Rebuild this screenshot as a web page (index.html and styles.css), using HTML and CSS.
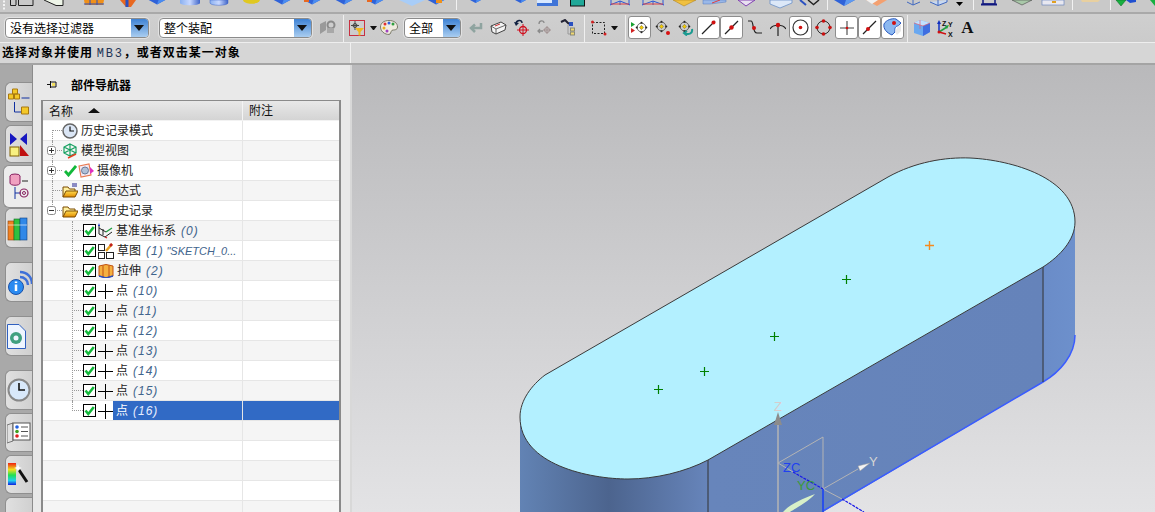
FILE: index.html
```html
<!DOCTYPE html>
<html lang="zh">
<head>
<meta charset="utf-8">
<title>部件导航器</title>
<link rel="stylesheet" href="styles.css">
</head>
<body>
<svg class="defs" aria-hidden="true">
  <defs>
    <linearGradient id="cyl" x1="0" y1="0" x2="1" y2="0"><stop offset="0" stop-color="#8ab0f0"/><stop offset=".5" stop-color="#c8d8ff"/><stop offset="1" stop-color="#3f64c8"/></linearGradient>
    <linearGradient id="side" gradientUnits="userSpaceOnUse" x1="520" y1="0" x2="1075" y2="0">
      <stop offset="0" stop-color="#6283b4"/><stop offset=".16" stop-color="#4c648e"/><stop offset=".34" stop-color="#6785bb"/><stop offset=".94" stop-color="#6583ba"/><stop offset=".945" stop-color="#6a8cc8"/><stop offset="1" stop-color="#6d90cc"/>
    </linearGradient>
    <linearGradient id="bg" x1="0" y1="0" x2="0" y2="1"><stop offset="0" stop-color="#b9b9bb"/><stop offset="1" stop-color="#e3e3e5"/></linearGradient>
    <linearGradient id="folder" x1="0" y1="0" x2="0" y2="1"><stop offset="0" stop-color="#ffdc50"/><stop offset="1" stop-color="#e08a00"/></linearGradient>
    <symbol id="chk" viewBox="0 0 13 13"><rect x=".5" y=".5" width="12" height="12" fill="#fff" stroke="#000"/><path d="M2.5 6.5 5.3 10 10.8 3" fill="none" stroke="#12b83a" stroke-width="2.6"/></symbol>
    <symbol id="pt" viewBox="0 0 15 16"><path d="M0 8.5H15M7.5 1V16" stroke="#000" fill="none"/></symbol>
    <symbol id="plus" viewBox="0 0 9 9"><rect x=".5" y=".5" width="8" height="8" rx="2" fill="#fff" stroke="#8c8c8c"/><path d="M2 4.5H7M4.5 2V7" stroke="#333"/></symbol>
    <symbol id="minus" viewBox="0 0 9 9"><rect x=".5" y=".5" width="8" height="8" rx="2" fill="#fff" stroke="#8c8c8c"/><path d="M2 4.5H7" stroke="#333"/></symbol>
    <symbol id="fold" viewBox="0 0 16 16"><path d="M1 14V4H6L7.5 6H13V9" fill="#fff0a0" stroke="#7a4a00"/><path d="M1 14 4 8H16L13 14Z" fill="url(#folder)" stroke="#7a4a00"/></symbol>
    <symbol id="cubeb" viewBox="0 0 22 8"><path d="M0 0 11 6 22 0Z" fill="#2f62d8"/><path d="M11 6 22 0H13Z" fill="#4a8cf0"/></symbol>
    <symbol id="nod" viewBox="0 0 15 15"><g fill="none" stroke="#444"><circle cx="7.5" cy="7.5" r="5"/></g><path d="M7.5 5 10 7.5 7.5 10 5 7.5Z" fill="#f0c800" stroke="#555" stroke-width=".5"/><circle cx="7.5" cy="2" r="1.2" fill="#222"/><circle cx="7.5" cy="13" r="1.2" fill="#222"/><circle cx="2" cy="7.5" r="1.2" fill="#222"/><circle cx="13" cy="7.5" r="1.2" fill="#222"/></symbol>
  </defs>
</svg>

<header class="strip">
  <svg class="strip-art" width="1155" height="12" viewBox="0 0 1155 12" aria-hidden="true">
    <path d="M3 1.5h2M3 5h2M3 8.5h2" stroke="#f4f4f4" stroke-width="2"/>
    <path d="M10.500 0V5.500H16M18.500 0V5.500H33V0M16 0V5" fill="none" stroke="#222"/>
    <path d="M44 0 56 5H63V0Z" fill="#eef5e8"/><path d="M44 0 56 5.500 63 5.500V0" fill="none" stroke="#222"/>
    <path d="M84 0H104L103 5H85Z" fill="#f09018"/><path d="M90 0V5M97 0V5M84 4H104" stroke="#2a50c0"/>
    <path d="M120 0H136L131 7H126Z" fill="#e86820"/><path d="M127 0V7" stroke="#2a50c0" stroke-width="3"/>
    <use href="#cubeb" x="147" y="0" width="20" height="6"/>
    <path d="M180 0H200V3C200 6 180 6 180 3Z" fill="url(#cyl)"/>
    <path d="M210 0H228V3C228 6 210 6 210 3Z" fill="url(#cyl)" stroke="#3f64c8" stroke-width=".5"/>
    <path d="M243 0H260C259 5 244 5 243 0Z" fill="#e0c820"/>
    <use href="#cubeb" x="272" y="0" width="20" height="6"/>
    <use href="#cubeb" x="302" y="0" width="20" height="6"/><rect x="304" y="0" width="5" height="2" fill="#e86820"/>
    <use href="#cubeb" x="334" y="0" width="20" height="6"/>
    <use href="#cubeb" x="365" y="0" width="20" height="6"/><rect x="367" y="0" width="5" height="2" fill="#e86820"/>
    <path d="M399 0H425L412 6Z" fill="#a8cdf8"/>
    <use href="#cubeb" x="426" y="0" width="20" height="6"/><rect x="436" y="0" width="6" height="3" fill="#f09018"/>
    <rect x="456" y="0" width="1" height="10" fill="#f2f2f2"/>
    <use href="#cubeb" x="466" y="0" width="19" height="4"/>
    <use href="#cubeb" x="510" y="0" width="21" height="4"/>
    <path d="M537 0H558V6H537Z" fill="#3f74d8"/><path d="M537 0H552V3H537Z" fill="#d8e8ff"/>
    <rect x="570.500" y="-2" width="14" height="8" fill="#20a898" stroke="#111"/>
    <path d="M610 5 620 1 630 5M620 1V5M611 0V5M629 0V5" fill="none" stroke="#2a58d8"/><path d="M611 4H629" stroke="#e04040"/>
    <path d="M642 5 653 1 664 5M653 1V5M643 0V5M663 0V5" fill="none" stroke="#2a58d8"/><path d="M643 4H663" stroke="#e04040"/>
    <path d="M673 0H696L684 6Z" fill="#f0c040" stroke="#a87810" stroke-width=".5"/>
    <path d="M703 0H726V2L710 4H703Z" fill="#9ab8e8" stroke="#5078c0" stroke-width=".5"/><path d="M712 3 720 0" stroke="#e04040"/>
    <path d="M738 0H755L746 6Z" fill="#e8e0f0" stroke="#8040b0"/>
    <path d="M770 0V4L780 8 792 3V0Z" fill="#dce8f8" stroke="#6a90c8" stroke-width=".8"/>
    <path d="M800 0 806 5" stroke="#2a50c0" stroke-width="2"/><path d="M808 0 814 5M819 0 813 5" stroke="#222" stroke-width="1.500"/>
    <rect x="827" y="0" width="1" height="10" fill="#f2f2f2"/>
    <path d="M834 0H855L844 6Z" fill="#2f62d8"/><path d="M844 6 855 0H846Z" fill="#5f9af0"/>
    <path d="M866 0H887L877 6Z" fill="#f4a070"/><path d="M866 0H878L872 4Z" fill="#f0f0f0"/>
    <path d="M907 2 913 5 920 2M913 0V5" fill="none" stroke="#4068c0"/>
    <path d="M930 2 938 5.500 947 2V0M938 0V5.500" fill="#c8d8f0" stroke="#4068c0"/>
    <path d="M956 2H963L959.500 6Z" fill="#000"/>
    <rect x="973" y="0" width="1" height="10" fill="#f2f2f2"/>
    <path d="M983 0V4H995V0" fill="none" stroke="#101880" stroke-width="1.500"/><path d="M981 4.500H997" stroke="#101880" stroke-width="2"/>
    <path d="M1012 0 1022 5 1032 0Z" fill="#a8c8a8" stroke="#444" stroke-width=".6"/>
    <rect x="1042" y="0" width="22" height="5" fill="#e8e8f0" stroke="#5a7ab8" stroke-width=".6"/><rect x="1052" y="1" width="4" height="2" fill="#e0a020"/>
    <rect x="1072" y="0" width="1" height="10" fill="#f2f2f2"/>
    <path d="M1081 0H1100L1098 2H1082Z" fill="#e8d0a0"/>
    <rect x="1110" y="0" width="1" height="10" fill="#f2f2f2"/>
    <path d="M1116 0H1126L1121 6Z" fill="#18b040" stroke="#0a6020" stroke-width=".5"/><path d="M1126 0H1136V2L1130 3Z" fill="#2050d0"/>
    <path d="M1150 0H1155V6Z" fill="#18b040"/>
  </svg>
</header>

<div class="toolbar">
  <div class="combo combo-filter"><span class="combo-text">没有选择过滤器</span><span class="combo-btn"></span></div>
  <div class="combo combo-asm"><span class="combo-text">整个装配</span><span class="combo-btn"></span></div>
  <span class="slot"><svg width="17" height="15" viewBox="0 0 17 15"><path d="M1 4 7 1 7 10 1 14Z" fill="#9a9a9a"/><circle cx="12" cy="5" r="3.500" fill="none" stroke="#8a8a8a" stroke-width="2"/><rect x="8" y="8" width="7" height="5" fill="#a8a8a8"/></svg></span>
  <i class="sep sep-a"></i>
  <span class="slot"><svg width="17" height="16" viewBox="0 0 17 16"><rect x=".5" y=".5" width="15" height="15" fill="none" stroke="#c83040"/><path d="M6 1V10M2 5.500H10" stroke="#444"/><circle cx="6" cy="5.500" r="2" fill="none" stroke="#444"/><path d="M6 8H15L11.500 12V15.500H9.500V12Z" fill="#f0b820"/></svg></span>
  <i class="caret"></i>
  <span class="slot"><svg width="18" height="15" viewBox="0 0 18 15"><path d="M9 .5C14 .5 17.500 3 17.500 7 17.500 10 14 10 13 10 11 10 11 13 10 14 8 15.500 .5 13 .5 7 .5 3 4 .5 9 .5Z" fill="#f0ece0" stroke="#7a7a68"/><circle cx="5" cy="4" r="1.500" fill="#e03030"/><circle cx="9" cy="3" r="1.500" fill="#3060e0"/><circle cx="13" cy="4" r="1.500" fill="#30a040"/><circle cx="4" cy="8" r="1.500" fill="#e8b020"/><circle cx="7" cy="11" r="1.500" fill="#a040c0"/></svg></span>
  <div class="combo combo-all"><span class="combo-text">全部</span><span class="combo-btn"></span></div>
  <span class="slot slot-first"><svg width="14" height="12" viewBox="0 0 14 12"><path d="M12 1V6H3M6 2.500 2 6 6 10" fill="none" stroke="#8fa4a0" stroke-width="2.500"/></svg></span>
  <span class="slot"><svg width="17" height="14" viewBox="0 0 17 14"><path d="M1 5 11 1 16 4 15 9 6 13 2 11Z" fill="#f4f4f4" stroke="#444"/><path d="M1 5 6 8 16 4M6 8V13" fill="none" stroke="#444" stroke-width=".8"/><path d="M5 5 10 3" stroke="#d03030"/></svg></span>
  <span class="slot"><svg width="15" height="17" viewBox="0 0 15 17"><path d="M2 5C2 1 8 0 8 4" fill="none" stroke="#102040" stroke-width="1.500"/><path d="M0 3 2 7 5 4Z" fill="#102040"/><circle cx="9" cy="11" r="3.500" fill="none" stroke="#d01020" stroke-width="1.300"/><path d="M9 5V17M3 11H15" stroke="#d01020"/></svg></span>
  <span class="slot"><svg width="15" height="17" viewBox="0 0 15 17"><path d="M2 5C2 1 7 1 7 4M6 12H1M3 10 1 12 3 14" fill="none" stroke="#8a8a8a" stroke-width="1.300"/><circle cx="10" cy="11" r="2.500" fill="none" stroke="#a09090"/><path d="M10 7V15M6 11H14" stroke="#a09090"/></svg></span>
  <span class="slot"><svg width="16" height="17" viewBox="0 0 16 17"><path d="M1 3 5 1 9 5" fill="none" stroke="#223" stroke-width="2"/><rect x="9" y="3" width="4" height="4" fill="#2a50c0"/><rect x="10.500" y="9" width="4" height="3" fill="#f0d870" stroke="#887"/><rect x="10.500" y="13" width="4" height="3" fill="#f0d870" stroke="#887"/><path d="M8 6V15H10" fill="none" stroke="#999"/></svg></span>
  <i class="sep sep-b"></i>
  <span class="slot"><svg width="16" height="16" viewBox="0 0 16 16"><rect x="1.500" y="2.500" width="12" height="11" fill="none" stroke="#222" stroke-dasharray="2 1.500"/><circle cx="1.500" cy="2" r="1.500" fill="#d02020"/><circle cx="14" cy="14" r="1.500" fill="#d02020"/></svg></span>
  <i class="caret caret-wide"></i>
  <i class="sep sep-c"></i>
  <span class="slot boxed"><svg width="17" height="15" viewBox="0 0 17 15"><path d="M0 2 4 4.500 0 7Z" fill="#18a030"/><path d="M0 8 4 10.500 0 13Z" fill="#d02020"/><use href="#nod" x="4" y="1" width="13" height="13"/></svg></span>
  <span class="slot"><svg width="15" height="15" viewBox="0 0 15 15"><use href="#nod" width="13" height="13"/><rect x="11" y="11" width="4" height="4" rx="2" fill="#d81010"/></svg></span>
  <span class="slot"><svg width="16" height="16" viewBox="0 0 16 16"><use href="#nod" width="13" height="13"/><path d="M14 9C15 14 10 15 7 13M9 11 6 13 9 15.500" fill="none" stroke="#1a9a90" stroke-width="2"/></svg></span>
  <span class="slot boxed"><svg width="15" height="15" viewBox="0 0 15 15"><path d="M1 14 14 1" stroke="#222" stroke-width="1.200"/><circle cx="12.500" cy="2.500" r="2" fill="#d01010"/></svg></span>
  <span class="slot boxed"><svg width="15" height="15" viewBox="0 0 15 15"><path d="M1 14 14 1" stroke="#222" stroke-width="1.200"/><circle cx="7.500" cy="7.500" r="2.200" fill="#d01010"/></svg></span>
  <span class="slot"><svg width="15" height="15" viewBox="0 0 15 15"><path d="M1 1H4C7 1 5 13 10 13H15" fill="none" stroke="#222" stroke-width="1.200"/><circle cx="7" cy="8" r="2" fill="#d01010"/></svg></span>
  <span class="slot"><svg width="16" height="16" viewBox="0 0 16 16"><path d="M0 9C3 4 13 4 16 9M8 5V16" fill="none" stroke="#222" stroke-width="1.200"/><circle cx="8" cy="5" r="2.200" fill="#d01010"/></svg></span>
  <span class="slot boxed"><svg width="17" height="17" viewBox="0 0 17 17"><circle cx="8.500" cy="8.500" r="7.500" fill="#fff" stroke="#333" stroke-width="1.200"/><circle cx="8.500" cy="8.500" r="1.800" fill="#d01010"/></svg></span>
  <span class="slot"><svg width="17" height="17" viewBox="0 0 17 17"><circle cx="8.500" cy="8.500" r="6.500" fill="none" stroke="#333"/><g fill="#c81010"><circle cx="8.500" cy="2" r="1.800"/><circle cx="8.500" cy="15" r="1.800"/><circle cx="2" cy="8.500" r="1.800"/><circle cx="15" cy="8.500" r="1.800"/></g></svg></span>
  <span class="slot boxed"><svg width="14" height="14" viewBox="0 0 14 14"><path d="M7 0V14M0 7H14" stroke="#444" stroke-width="1.100"/><circle cx="7" cy="7" r="1.300" fill="#d01010"/></svg></span>
  <span class="slot boxed"><svg width="15" height="15" viewBox="0 0 15 15"><path d="M1 14 14 1" stroke="#222" stroke-width="1.200"/><circle cx="6" cy="9" r="2" fill="#d01010"/></svg></span>
  <span class="slot boxed"><svg width="19" height="19" viewBox="0 0 19 19"><path d="M1 6C3 2 9 0 13 1L18 5 15 8C13 8 11 10 12 14L9 17C4 15 0 11 1 6Z" fill="#8cb8f0" stroke="#2a5ac0"/><path d="M12 14 15 8 18 6V13L14 17Z" fill="#e8e8e8"/><circle cx="11" cy="5" r="2" fill="#d01010"/></svg></span>
  <i class="sep sep-d"></i>
  <span class="slot"><svg width="18" height="18" viewBox="0 0 18 18"><path d="M1 4 7 1 17 4V13L10 17 1 14Z" fill="#6aa8f0"/><path d="M1 4 10 7 17 4 7 1Z" fill="#c0e0ff"/><path d="M10 7V17L17 13V4Z" fill="#3f6ee0"/><path d="M1 4 10 7 17 4M7 1V10" fill="none" stroke="#e06070" stroke-width=".7"/></svg></span>
  <span class="slot"><svg width="18" height="18" viewBox="0 0 18 18"><path d="M3 13V3" stroke="#1030c0" stroke-width="1.500"/><path d="M1 5 3 1 5 5Z" fill="#1030c0"/><path d="M3 13 11 8" stroke="#20a040" stroke-width="1.500"/><path d="M9 7 13 6 11 10Z" fill="#20a040"/><path d="M3 13 10 15" stroke="#d01010" stroke-width="1.500"/><circle cx="3" cy="13" r="1.500" fill="#d01010"/><text class="ax" x="6" y="7">Z</text><text class="ax" x="12" y="8">Y</text><text class="ax" x="12" y="17.500">X</text></svg></span>
  <span class="slot"><span class="big-a">A</span></span>
</div>

<div class="status">
  <p class="status-text">选择对象并使用 <span class="mb3">MB3</span>，或者双击某一对象</p>
  <i class="status-sep"></i>
</div>

<main class="main">
  <nav class="rail">
    <div class="tab t40"><svg width="23" height="28" viewBox="0 0 22 28"><path d="M5 1H10V6H5ZM1 6H6V11H1ZM7 6H12V11H7Z" fill="#f4c828" stroke="#a87810"/><path d="M7 14V24H14M14 10H22" fill="none" stroke="#1030a0" stroke-width="1"/><path d="M14 19H21V26H14Z" fill="#f4c828" stroke="#a87810"/></svg></div>
    <div class="tab t38 mt3"><svg width="22" height="28" viewBox="0 0 22 28"><path d="M3 3 10 9 3 15ZM20 3 13 9 20 15Z" fill="#1818c0"/><rect x="3" y="17" width="9" height="9" fill="#f8f080" stroke="#806000"/><path d="M13 26V15L22 26Z" fill="#c01010"/></svg></div>
    <div class="tab tab-active t43 mt2"><svg width="22" height="28" viewBox="0 0 22 28"><ellipse cx="8" cy="3" rx="5" ry="2" fill="#f0a0c0" stroke="#882060"/><path d="M3 3V10C3 13 13 13 13 10V3" fill="#f0a0c0" stroke="#882060"/><path d="M8 14V26M8 20H14" fill="none" stroke="#1030a0"/><path d="M15 8H21" stroke="#222"/><circle cx="17" cy="20" r="4" fill="none" stroke="#882060" stroke-width="1.200"/><circle cx="17" cy="20" r="1.500" fill="none" stroke="#882060"/></svg></div>
    <div class="tab t40"><svg width="24" height="26" viewBox="0 0 24 26"><rect x="1" y="6" width="6" height="19" fill="#f08020" stroke="#884010" stroke-width=".6"/><rect x="7" y="4" width="6" height="21" fill="#30c040" stroke="#107020" stroke-width=".6"/><rect x="13" y="3" width="7" height="22" fill="#3088e8" stroke="#104080" stroke-width=".6"/><path d="M1 10H20" stroke="#fff" stroke-width=".6"/></svg></div>
    <div class="tab t40 mt14"><svg width="26" height="27" viewBox="0 0 26 27"><path d="M13 3C20 3 25 8 25 15M13 8C17 8 21 11 21 16" fill="none" stroke="#3f70d8" stroke-width="2.500"/><circle cx="9" cy="18" r="7.500" fill="#2a8af0" stroke="#1a50a8"/><path d="M9 12.500V14M9 15.500V22" stroke="#fff" stroke-width="2.500"/></svg></div>
    <div class="tab t40 mt14"><svg width="19" height="25" viewBox="0 0 19 25"><path d="M.5 .5H12L18.500 7V24.500H.5Z" fill="#eef5ff" stroke="#3060c0"/><circle cx="9" cy="14" r="6" fill="#40a080"/><circle cx="9" cy="14" r="2.500" fill="#f0f4ff"/></svg></div>
    <div class="tab t40 mt14"><svg width="24" height="24" viewBox="0 0 24 24"><circle cx="12" cy="12" r="10.500" fill="#d8e8fa" stroke="#888" stroke-width="2"/><path d="M12 5V12H18" fill="none" stroke="#111" stroke-width="1.600"/></svg></div>
    <div class="tab t39 mt3"><svg width="24" height="24" viewBox="0 0 24 24"><path d="M0 4 6 2V20L0 22Z" fill="#e0e0e0" stroke="#777"/><rect x="6" y="2" width="17" height="17" fill="#fff" stroke="#555"/><circle cx="10" cy="6" r="1.800" fill="#2060e0"/><circle cx="10" cy="10.500" r="1.800" fill="#40a020"/><circle cx="10" cy="15" r="1.800" fill="#e02020"/><path d="M14 6H21M14 10.500H21M14 15H21" stroke="#555"/></svg></div>
    <div class="tab t39 mt3"><svg width="24" height="25" viewBox="0 0 24 25"><defs><linearGradient id="rb" x1="0" y1="0" x2="0" y2="1"><stop offset="0" stop-color="#f02010"/><stop offset=".3" stop-color="#f0e020"/><stop offset=".55" stop-color="#20e050"/><stop offset=".8" stop-color="#20d0f0"/><stop offset="1" stop-color="#1020e0"/></linearGradient></defs><rect x="1" y="1" width="8" height="22" fill="url(#rb)"/><path d="M12 8 20 20" stroke="#111" stroke-width="3"/><path d="M10 5 11 2 12 5 15 6 12 7 11 10 10 7 7 6Z" fill="#fff"/></svg></div>
    <div class="tab t39 mt3"><svg width="22" height="12" viewBox="0 0 22 12"><rect x="1" y="3" width="6" height="6" fill="#3a70d8"/><path d="M10 4H22" stroke="#3050c0"/><path d="M7 3 9 1 10 3Z" fill="#fff"/></svg></div>
  </nav>

  <aside class="panel">
    <div class="panel-title">
      <svg width="11" height="9" viewBox="0 0 11 9"><path d="M0 4.500H3M3.500 1V8M3.500 2H9V7H3.500" fill="none" stroke="#111"/><rect x="5" y="3" width="3" height="3" fill="#f4e060"/></svg>
      <span>部件导航器</span>
    </div>
    <div class="tree">
      <div class="tree-head"><div class="h-name">名称<i class="sort"></i></div><div class="h-note">附注</div></div>

      <div class="row l1 first">
        <div class="name"><span class="exp"></span><span class="ic ic-m6"><svg width="16" height="16" viewBox="0 0 16 16"><circle cx="8" cy="8" r="7" fill="#dbe6f5" stroke="#666" stroke-width="1.500"/><path d="M8 3.500V8H12" fill="none" stroke="#111" stroke-width="1.200"/></svg></span><span class="label">历史记录模式</span></div><div class="note"></div>
      </div>
      <div class="row l1">
        <div class="name"><svg class="exp" width="9" height="9"><use href="#plus"/></svg><span class="ic ic-m6"><svg width="16" height="16" viewBox="0 0 16 16"><path d="M8 1 14 4V10L8 13 2 10V4ZM2 4 8 7 14 4M8 7V13M2 10 8 7 14 10M8 1V7" fill="none" stroke="#16a060" stroke-width="1.200"/><path d="M6 15 14 11" stroke="#e84020" stroke-width="1.500"/></svg></span><span class="label">模型视图</span></div><div class="note"></div>
      </div>
      <div class="row l1">
        <div class="name"><svg class="exp" width="9" height="9"><use href="#plus"/></svg><span class="ic ic-m8"><svg width="13" height="13" viewBox="0 0 13 13"><path d="M1 7 4.500 11 12 2" fill="none" stroke="#12b83a" stroke-width="2.800"/></svg></span><span class="ic ic-m1"><svg width="16" height="16" viewBox="0 0 16 16"><path d="M1 3 11 1 13 12 3 14Z" fill="#f4e8f0" stroke="#e87850" stroke-width="1.100"/><circle cx="7" cy="7.500" r="3.500" fill="#b0c0d8" stroke="#6a7a98"/><path d="M12 4 16 8 12 11Z" fill="#e030c0"/></svg></span><span class="label">摄像机</span></div><div class="note"></div>
      </div>
      <div class="row l1">
        <div class="name"><span class="exp"></span><span class="ic ic-m6"><svg width="16" height="16" viewBox="0 0 16 16"><use href="#fold"/><path d="M10 1H15M10 3H15" stroke="#202090"/></svg></span><span class="label">用户表达式</span></div><div class="note"></div>
      </div>
      <div class="row l1 end">
        <div class="name"><svg class="exp" width="9" height="9"><use href="#minus"/></svg><span class="ic ic-m6"><svg width="16" height="16"><use href="#fold"/></svg></span><span class="label">模型历史记录</span></div><div class="note"></div>
      </div>

      <div class="row l2">
        <div class="name"><svg class="cb" width="13" height="13"><use href="#chk"/></svg><span class="ic ic-m2"><svg width="15" height="16" viewBox="0 0 15 16"><path d="M1 2V11L7 14 14 9M1 5 8 9M5 6V12" fill="none" stroke="#222"/><path d="M8 9 14 5" stroke="#20a040" stroke-width="1.300"/><path d="M7 14 9 15" stroke="#d02020" stroke-width="1.300"/><path d="M1 0 2 3 0 3Z" fill="#1030c0"/></svg></span><span class="label">基准坐标系<em>(0)</em></span></div><div class="note"></div>
      </div>
      <div class="row l2">
        <div class="name"><svg class="cb" width="13" height="13"><use href="#chk"/></svg><span class="ic ic-m2"><svg width="16" height="16" viewBox="0 0 16 16"><g fill="#fff" stroke="#222"><rect x=".5" y="1.500" width="6" height="6"/><rect x=".5" y="9.500" width="6" height="6"/><rect x="8.500" y="9.500" width="7" height="6"/></g><path d="M8 8 14 1" stroke="#e8a020" stroke-width="2.500"/><path d="M12 3 14 1" stroke="#c02020" stroke-width="2.500"/></svg></span><span class="label">草图<em>(1)</em> <em class="tight">"SKETCH_0...</em></span></div><div class="note"></div>
      </div>
      <div class="row l2">
        <div class="name"><svg class="cb" width="13" height="13"><use href="#chk"/></svg><span class="ic ic-m2"><svg width="16" height="14" viewBox="0 0 16 14"><path d="M1 2 8 .5 15 2V12L8 14 1 12Z" fill="#f4b040" stroke="#c05010"/><path d="M5 1.500V13M11 1.500V13" stroke="#c05010"/><path d="M1 12 8 14 15 12" fill="none" stroke="#2a50c0" stroke-width="1.400"/></svg></span><span class="label">拉伸<em>(2)</em></span></div><div class="note"></div>
      </div>
      <div class="row l2"><div class="name"><svg class="cb" width="13" height="13"><use href="#chk"/></svg><svg class="pt" width="15" height="16"><use href="#pt"/></svg><span class="label">点<em>(10)</em></span></div><div class="note"></div></div>
      <div class="row l2"><div class="name"><svg class="cb" width="13" height="13"><use href="#chk"/></svg><svg class="pt" width="15" height="16"><use href="#pt"/></svg><span class="label">点<em>(11)</em></span></div><div class="note"></div></div>
      <div class="row l2"><div class="name"><svg class="cb" width="13" height="13"><use href="#chk"/></svg><svg class="pt" width="15" height="16"><use href="#pt"/></svg><span class="label">点<em>(12)</em></span></div><div class="note"></div></div>
      <div class="row l2"><div class="name"><svg class="cb" width="13" height="13"><use href="#chk"/></svg><svg class="pt" width="15" height="16"><use href="#pt"/></svg><span class="label">点<em>(13)</em></span></div><div class="note"></div></div>
      <div class="row l2"><div class="name"><svg class="cb" width="13" height="13"><use href="#chk"/></svg><svg class="pt" width="15" height="16"><use href="#pt"/></svg><span class="label">点<em>(14)</em></span></div><div class="note"></div></div>
      <div class="row l2"><div class="name"><svg class="cb" width="13" height="13"><use href="#chk"/></svg><svg class="pt" width="15" height="16"><use href="#pt"/></svg><span class="label">点<em>(15)</em></span></div><div class="note"></div></div>
      <div class="row l2 end selected"><div class="name"><svg class="cb" width="13" height="13"><use href="#chk"/></svg><svg class="pt" width="15" height="16"><use href="#pt"/></svg><span class="label">点<em>(16)</em></span></div><div class="note"></div></div>

      <div class="row"><div class="name"></div><div class="note"></div></div>
      <div class="row"><div class="name"></div><div class="note"></div></div>
      <div class="row"><div class="name"></div><div class="note"></div></div>
      <div class="row"><div class="name"></div><div class="note"></div></div>
      <div class="row"><div class="name"></div><div class="note"></div></div>
    </div>
  </aside>

  <section class="viewport">
    <svg class="scene" width="803" height="447" viewBox="352 65 803 447" aria-label="模型视图">
      <rect x="352" y="65" width="803" height="447" fill="url(#bg)"/>
      <path d="M520 417V512H823L1043 382C1060 372 1075 355 1075 335V222Z" fill="url(#side)"/>
      <path d="M823 511 1043 382C1060 372 1075 355 1075 335" fill="none" stroke="#3a5cff" stroke-width="1.500"/>
      <path d="M1043 267V382M708 460V512" stroke="#333" stroke-width="1"/>
      <path d="M545 375 888 177C915 162 945 157 970 158 1012 160 1075 178 1075 222 1075 240 1060 256 1043 267L708 460C685 472 655 479 628 479 590 479 520 465 520 417 520 400 532 385 545 375Z" fill="#b3f0ff" stroke="#3a3a3a" stroke-width="1"/>
      <g stroke="#008000" fill="none" stroke-width="1.200">
        <path d="M654 389.500H663M658.500 385V394"/>
        <path d="M700 371.500H709M704.500 367V376"/>
        <path d="M770 336.500H779M774.500 332V341"/>
        <path d="M842 279.500H851M846.500 275V284"/>
      </g>
      <path d="M925 245.500H934M929.500 241V250" stroke="#f58a1e" fill="none" stroke-width="1.400"/>
      <g fill="none" stroke="#b4b4b4" stroke-width="1">
        <path d="M778 425V512" stroke-width="1.500"/>
        <path d="M778 463 823 437V489L858 469"/>
        <path d="M778 463 793 472M823 489 842 499"/>
      </g>
      <path d="M778 412 774 425H782Z" fill="#8c8c8c"/>
      <path d="M858 466 870 463 860 471Z" fill="#f4f4f4" stroke="#999" stroke-width=".5"/>
      <path d="M793 472 823 489M842 499 864 512" stroke="#1818e8" stroke-width="1.200" stroke-dasharray="3 1"/>
      <path d="M823 489V512" stroke="#2a50e8" stroke-width="2"/>
      <path d="M783 512C790 504 802 499 815 494 808 502 796 508 790 512Z" fill="#d8f0c8"/>
      <text class="lbl lz" x="778" y="411">Z</text>
      <text class="lbl lzc" x="783" y="472">ZC</text>
      <text class="lbl lyc" x="797" y="490">YC</text>
      <text class="lbl ly" x="869" y="466">Y</text>
    </svg>
  </section>
</main>
</body>
</html>
```

FILE: styles.css
```css
* { box-sizing: border-box; }
html, body { margin: 0; padding: 0; height: 512px; overflow: hidden; }
body {
  width: 1155px;
  background: #c8c8c8;
  font: 12px/16px "Noto Sans CJK SC", "Liberation Sans", sans-serif;
  color: #111;
}
svg { display: block; flex: none; }
.defs { width: 0; height: 0; position: absolute; }

/* cropped top toolbar */
.strip {
  height: 14px;
  background: #c9c9c9;
  border-bottom: 2px solid #a9a9a9;
  overflow: hidden;
}

/* second toolbar */
.toolbar {
  height: 29px;
  padding: 0 0 0 5px;
  display: flex;
  align-items: center;
  background: linear-gradient(#cfcfcf, #cbcbcb);
  border-bottom: 1px solid #eeeeee;
}
.combo {
  height: 20px;
  display: flex;
  background: #fff;
  border: 1px solid #8b8b8b;
  border-radius: 4px;
  box-shadow: 0 0 0 1px #e2e2e2;
  overflow: hidden;
  flex: none;
  margin-top: -1px;
}
.combo-filter { width: 144px; margin-right: 10px; }
.combo-asm { width: 153px; margin-right: 4px; }
.combo-all { width: 57px; margin-left: 4px; }
.combo-text { flex: 1; padding-left: 4px; line-height: 17px; white-space: nowrap; color: #000; }
.combo-btn {
  width: 17px;
  position: relative;
  background: linear-gradient(#3e82d4, #a9cdf0);
}
.combo-btn::after {
  content: "";
  position: absolute;
  left: 3px;
  top: 6px;
  border: 5px solid transparent;
  border-top: 6px solid #111;
  border-bottom: 0;
}
.slot {
  width: 23px;
  height: 23px;
  flex: none;
  display: flex;
  align-items: center;
  justify-content: center;
  margin-top: -1px;
}
.slot-first { margin-left: 3px; }
.boxed {
  background: #fff;
  border: 1px solid #8d8d8d;
  border-radius: 3px;
}
.caret {
  width: 7px;
  margin-left: 1px;
  flex: none;
  border: 3px solid transparent;
  border-top: 4px solid #111;
  border-bottom: 0;
}
.caret-wide { margin: 0 3px 0 1px; }
.sep {
  width: 1px;
  height: 27px;
  background: #efefef;
  flex: none;
}
.sep-a { margin: 0 2px 0 4px; }
.sep-b { margin: 0 2px 0 5px; }
.sep-c { margin: 0 2px 0 4px; }
.sep-d { margin: 0 2px 0 3px; }
.ax { font: 700 7px "Liberation Sans", sans-serif; fill: #111; }
.big-a { font: 700 17px/23px "Liberation Serif", serif; color: #111; }

/* status line */
.status {
  height: 22px;
  display: flex;
  justify-content: space-between;
  background: #d6d6d6;
  border-bottom: 2px solid #a4a4a4;
}
.status-text {
  margin: 0;
  padding-left: 2px;
  font-weight: 700;
  line-height: 18px;
  letter-spacing: 1px;
  white-space: nowrap;
  color: #000;
}
.mb3 {
  font: 400 12px "Liberation Mono", monospace;
  color: #223355;
  letter-spacing: 1.800px;
}
.status-sep { width: 1px; margin-right: 804px; background: #f0f0f0; }

/* main */
.main { height: 447px; display: flex; }
.rail {
  width: 33px;
  flex: none;
  padding: 17px 0 0 5px;
  background: #a9a9a9;
  border-right: 1px solid #8b8b8b;
  display: flex;
  flex-direction: column;
  overflow: hidden;
}
.tab {
  flex: none;
  width: 27px;
  display: flex;
  align-items: center;
  justify-content: flex-start;
  padding-left: 1px;
  background: linear-gradient(90deg, #e0e0e0, #d0d0d0);
  border: 1px solid #8f8f8f;
  border-right: 0;
  border-radius: 6px 0 0 6px;
  overflow: hidden;
}
.t38 { height: 38px; }
.t39 { height: 39px; }
.t40 { height: 40px; }
.t43 { height: 43px; }
.mt2 { margin-top: 2px; }
.mt3 { margin-top: 3px; }
.mt14 { margin-top: 14px; }
.tab-active {
  width: 30px;
  margin-left: -2px;
  background: #ececec;
  padding-left: 3px;
  position: relative;
  z-index: 1;
}
.panel {
  width: 319px;
  flex: none;
  padding-left: 8px;
  background: #e9e9e9;
  border-right: 2px solid #d8d8d8;
  display: flex;
  flex-direction: column;
}
.panel-title {
  height: 35px;
  padding: 4px 0 0 6px;
  display: flex;
  align-items: center;
  gap: 13px;
  font-weight: 700;
  color: #000;
}
.tree {
  width: 300px;
  flex: 1;
  background: #fff;
  border: 2px solid #8a8a8a;
  border-top-width: 1px;
  border-bottom: 0;
  overflow: hidden;
}
.tree-head {
  height: 20px;
  display: flex;
  background: linear-gradient(#e8e8e8, #d4d4d4);
  border-bottom: 1px solid #f2f2f2;
  line-height: 18px;
  color: #111;
}
.h-name { width: 199px; padding-left: 6px; display: flex; align-items: center; }
.h-note { flex: 1; padding-left: 6px; border-left: 1px solid #f4f4f4; }
.sort {
  margin-left: 15px;
  border: 6px solid transparent;
  border-bottom: 5px solid #111;
  border-top: 0;
}
.row {
  height: 20px;
  display: flex;
  position: relative;
  border-bottom: 1px solid #e6e6e6;
}
.row:nth-child(odd) { background: #f5f5f5; }
.name {
  width: 199px;
  flex: none;
  display: flex;
  align-items: center;
  white-space: nowrap;
  color: #222;
}
.note { flex: 1; border-left: 1px solid #e6e6e6; }
.l1 .name { padding-left: 4px; }
.l2 .name { padding-left: 40px; }
.exp { width: 9px; height: 9px; flex: none; position: relative; z-index: 1; }
.ic { display: block; flex: none; position: relative; z-index: 1; }
.ic-m6 { margin-left: 6px; }
.ic-m8 { margin-left: 8px; }
.ic-m1 { margin-left: 1px; }
.ic-m2 { margin-left: 2px; }
.cb { position: relative; z-index: 1; }
.pt { margin-left: 2px; }
.label { padding-left: 3px; line-height: 18px; flex: 1; align-self: stretch; }
em {
  font: italic 12px "Liberation Sans", sans-serif;
  letter-spacing: 1px;
  color: #41648c;
  margin-left: 5px;
}
em.tight { font-size: 11px; letter-spacing: 0; margin-left: 0; }
.selected .label { background: #316ac5; color: #fff; }
.selected em { color: #e8eeff; }
.selected .note { background: #316ac5; border-left-color: #e6e6e6; }

/* tree connectors */
.l1::before, .l2::before {
  content: "";
  position: absolute;
  top: 0;
  height: 20px;
  border-left: 1px dotted #9a9a9a;
}
.l1::after, .l2::after {
  content: "";
  position: absolute;
  top: 9px;
  border-top: 1px dotted #9a9a9a;
}
.l1::before { left: 9px; }
.l1::after { left: 9px; width: 10px; }
.l2::before { left: 29px; }
.l2::after { left: 29px; width: 11px; }
.first::before { top: 9px; height: 11px; }
.end::before { height: 10px; }

/* viewport */
.viewport { flex: 1; overflow: hidden; background: #c8c8c8; }
.lbl { font: 13px "Liberation Sans", sans-serif; }
.lz { fill: #d8cccc; text-anchor: middle; }
.lzc { fill: #2040f0; }
.lyc { fill: #3a9a3a; }
.ly { fill: #d4d4d4; }
```
